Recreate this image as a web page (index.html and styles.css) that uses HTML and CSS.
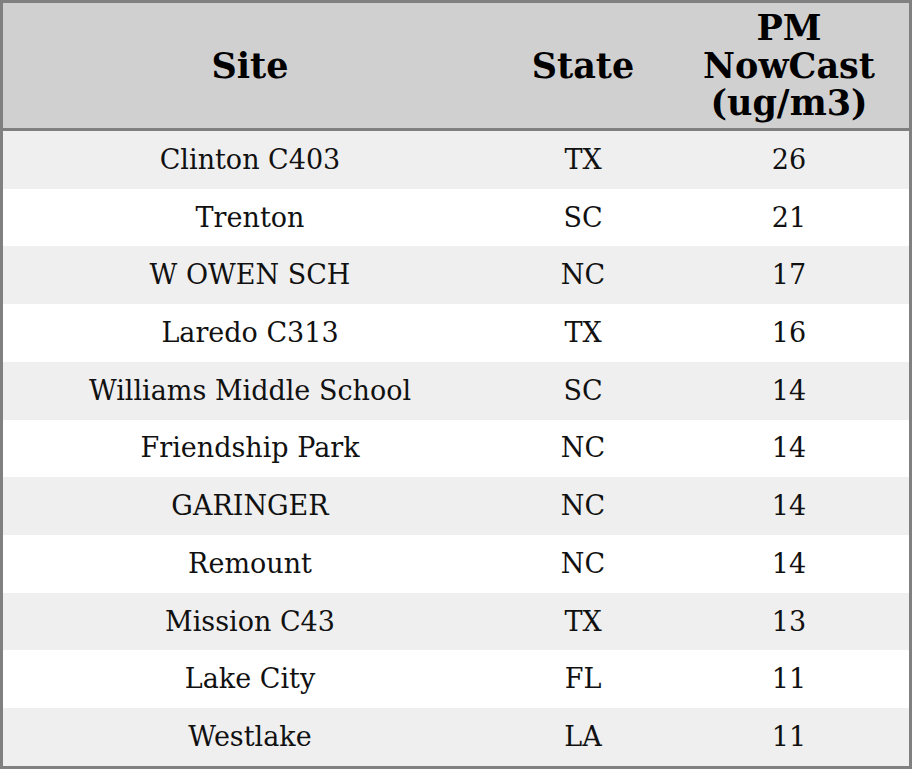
FILE: index.html
```html
<!DOCTYPE html>
<html>
<head>
<meta charset="utf-8">
<link rel="stylesheet" href="styles.css">
</head>
<body>
<table class="data">
  <colgroup>
    <col class="c-site">
    <col class="c-state">
    <col class="c-pm">
  </colgroup>
  <thead>
    <tr><th>Site</th><th>State</th><th>PM<br>NowCast<br>(ug/m3)</th></tr>
  </thead>
  <tbody>
    <tr><td>Clinton C403</td><td>TX</td><td>26</td></tr>
    <tr><td>Trenton</td><td>SC</td><td>21</td></tr>
    <tr><td>W OWEN SCH</td><td>NC</td><td>17</td></tr>
    <tr><td>Laredo C313</td><td>TX</td><td>16</td></tr>
    <tr><td>Williams Middle School</td><td>SC</td><td>14</td></tr>
    <tr><td>Friendship Park</td><td>NC</td><td>14</td></tr>
    <tr><td>GARINGER</td><td>NC</td><td>14</td></tr>
    <tr><td>Remount</td><td>NC</td><td>14</td></tr>
    <tr><td>Mission C43</td><td>TX</td><td>13</td></tr>
    <tr><td>Lake City</td><td>FL</td><td>11</td></tr>
    <tr><td>Westlake</td><td>LA</td><td>11</td></tr>
  </tbody>
</table>
</body>
</html>
```
FILE: styles.css
```css
html, body {
  margin: 0;
  padding: 0;
  background: #ffffff;
}
.data {
  width: 912px;
  height: 769px;
  border-collapse: separate;
  border-spacing: 0;
  border: 3px solid #808080;
  box-sizing: border-box;
  table-layout: fixed;
  font-family: "DejaVu Serif", serif;
  color: #111111;
}
.c-site { width: 494px; }
.c-state { width: 172px; }
.c-pm { width: 240px; }
.data th {
  background: #d0d0d0;
  font-size: 35px;
  font-weight: bold;
  line-height: 37.5px;
  height: 125px;
  padding: 0;
  text-align: center;
  vertical-align: middle;
  border-bottom: 3px solid #808080;
  color: #000000;
}
.data td {
  font-size: 27px;
  line-height: 30px;
  padding: 0;
  text-align: center;
  vertical-align: middle;
}
.data tbody tr:nth-child(odd) td {
  background: #efefef;
}
.data tbody tr:nth-child(even) td {
  background: #ffffff;
}
```
